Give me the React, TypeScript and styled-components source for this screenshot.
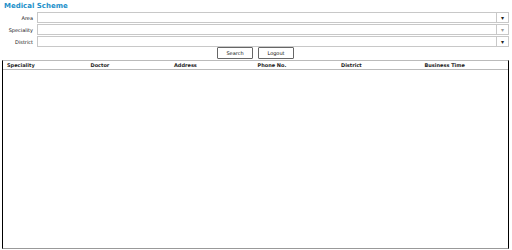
import React from 'react';
import styled, { createGlobalStyle } from 'styled-components';

const GlobalStyle = createGlobalStyle`
  html, body {
    margin: 0;
    padding: 0;
    background: #fff;
    font-family: "DejaVu Sans", Verdana, sans-serif;
  }
`;

const fields = ['Area', 'Speciality', 'District'];
const columns = ['Speciality', 'Doctor', 'Address', 'Phone No.', 'District', 'Business Time'];

export default function App() {
  return (
    <Page>
      <GlobalStyle />
      <Title>Medical Scheme</Title>
      <Form>
        {fields.map((f, i) => (
          <FieldRow key={f}>
            <Label>{f}</Label>
            <Select>
              <Arrow $faded={i === 1}>▾</Arrow>
            </Select>
          </FieldRow>
        ))}
      </Form>
      <Buttons>
        <Button>Search</Button>
        <Button>Logout</Button>
      </Buttons>
      <Table>
        <HeaderRow>
          {columns.map((c) => (
            <HeaderCell key={c}>{c}</HeaderCell>
          ))}
        </HeaderRow>
      </Table>
    </Page>
  );
}

const Page = styled.div`
  width: 512px;
  height: 250px;
  display: flex;
  flex-direction: column;
  box-sizing: border-box;
  padding: 0 3px 1px 2px;
`;

const Title = styled.div`
  color: #1a8fc9;
  font-weight: bold;
  font-size: 7px;
  padding: 2px 0 0 2px;
  height: 12px;
  box-sizing: border-box;
`;

const Form = styled.div`
  display: flex;
  flex-direction: column;
  gap: 1px;
`;

const FieldRow = styled.div`
  display: flex;
  align-items: center;
  height: 11px;
`;

const Label = styled.div`
  width: 31px;
  text-align: right;
  font-size: 5px;
  padding-right: 4px;
  color: #111;
`;

const Select = styled.div`
  flex: 1;
  height: 11px;
  box-sizing: border-box;
  border: 1px solid #c8c8c8;
  display: flex;
  justify-content: flex-end;
`;

const Arrow = styled.div<{ $faded?: boolean }>`
  width: 11px;
  border-left: 1px solid #c8c8c8;
  font-size: 6px;
  line-height: 9px;
  text-align: center;
  color: ${(p) => (p.$faded ? '#999' : '#222')};
`;

const Buttons = styled.div`
  display: flex;
  justify-content: center;
  gap: 5px;
  padding: 0 0 1px 0;
`;

const Button = styled.div`
  width: 36px;
  height: 12px;
  box-sizing: border-box;
  border: 1px solid #666;
  border-radius: 1px;
  font-size: 5px;
  display: flex;
  align-items: center;
  justify-content: center;
  color: #111;
  background: #fff;
`;

const Table = styled.div`
  flex: 1;
  border-left: 1px solid #000;
  border-right: 1px solid #000;
  border-top: 1px solid #bbb;
  border-bottom: 1px solid #999;
`;

const HeaderRow = styled.div`
  display: grid;
  grid-template-columns: repeat(6, 1fr);
  border-bottom: 1px solid #bbb;
  padding: 1px 0 1px 4px;
`;

const HeaderCell = styled.div`
  font-size: 5px;
  font-weight: bold;
  color: #222;
`;
